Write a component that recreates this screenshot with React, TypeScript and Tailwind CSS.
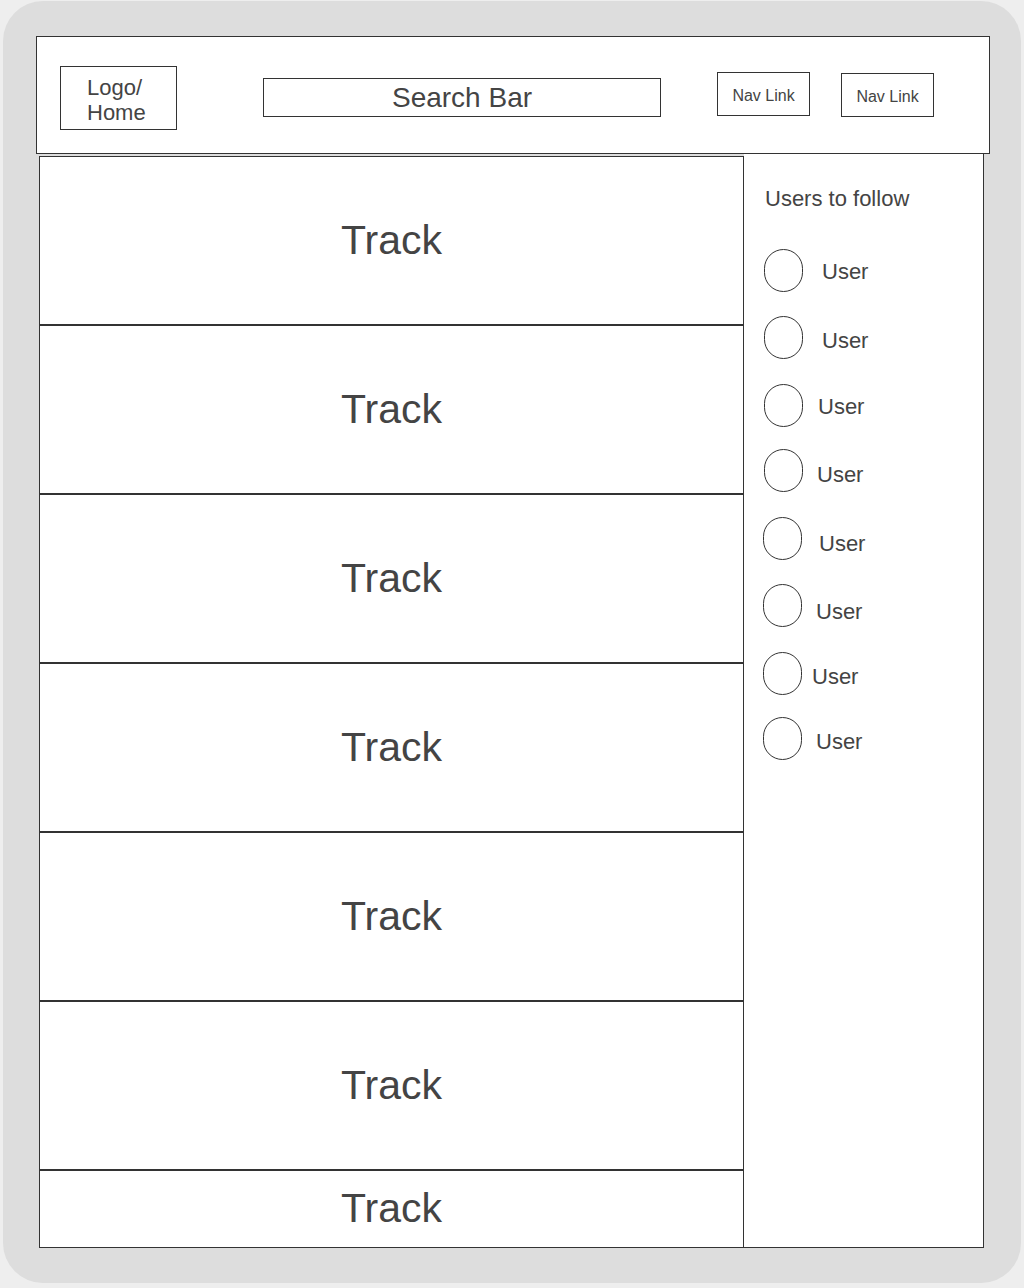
const users = [
  { row: "mt-[38px]", circle: "ml-0", label: "ml-[19px] mt-[11px]" },
  { row: "mt-[24px]", circle: "ml-0", label: "ml-[19px] mt-[13px]" },
  { row: "mt-[25px]", circle: "ml-0", label: "ml-[15px] mt-[11px]" },
  { row: "mt-[22px]", circle: "ml-0", label: "ml-[14px] mt-[14px]" },
  { row: "mt-[25px]", circle: "-ml-px", label: "ml-[17px] mt-[15px]" },
  { row: "mt-[24px]", circle: "-ml-px", label: "ml-[14px] mt-[16px]" },
  { row: "mt-[25px]", circle: "-ml-px", label: "ml-[10px] mt-[13px]" },
  { row: "mt-[22px]", circle: "-ml-px", label: "ml-[14px] mt-[13px]" },
];

function Track({ last }: { last?: boolean }) {
  return (
    <div
      className={`w-[705px] border border-[#333] bg-white flex items-center justify-center text-[41px] text-[#444] ${
        last ? "h-[78px]" : "h-[169px]"
      }`}
    >
      Track
    </div>
  );
}

export default function App() {
  return (
    <div className="min-h-[1288px] bg-[#eeeeee] pl-[3px] pt-px" style={{ fontFamily: '"Liberation Sans", Arial, sans-serif' }}>
      <div className="w-[1018px] h-[1282px] rounded-[40px] bg-[#dddddd] pl-[33px] pt-[35px]">
        {/* header */}
        <header className="w-[954px] h-[118px] border border-[#333] bg-white flex items-start pl-[23px]">
          <div className="mt-[29px] w-[117px] h-[64px] border border-[#333] flex flex-col items-start justify-center pl-[26px] pt-[4px] text-[22px] leading-[25px] text-[#444]">
            <span>Logo/</span>
            <span>Home</span>
          </div>
          <div className="mt-[41px] ml-[86px] w-[398px] h-[39px] border border-[#333] flex items-center justify-center pt-px text-[28px] text-[#444]">
            Search Bar
          </div>
          <div className="mt-[35px] ml-[56px] w-[93px] h-[44px] border border-[#333] flex items-center justify-center pt-[3px] text-[16px] text-[#444]">
            Nav Link
          </div>
          <div className="mt-[36px] ml-[31px] w-[93px] h-[44px] border border-[#333] flex items-center justify-center pt-[3px] text-[16px] text-[#444]">
            Nav Link
          </div>
        </header>

        {/* body */}
        <div className="ml-[3px] flex items-start">
          <div className="mt-[2px] flex flex-col">
            <Track />
            <Track />
            <Track />
            <Track />
            <Track />
            <Track />
            <Track last />
          </div>
          <aside className="w-[240px] h-[1094px] bg-white border-r border-b border-[#333] pl-[20px] pt-[32px] flex flex-col text-[#444]">
            <div className="text-[22px] leading-[24px] ml-px mt-px">Users to follow</div>
            {users.map((u, i) => (
              <div key={i} className={`flex items-start ${u.row}`}>
                <div className={`w-[39px] h-[43px] rounded-full border border-[#333] ${u.circle}`} />
                <span className={`text-[22px] leading-[24px] ${u.label}`}>User</span>
              </div>
            ))}
          </aside>
        </div>
      </div>
    </div>
  );
}
